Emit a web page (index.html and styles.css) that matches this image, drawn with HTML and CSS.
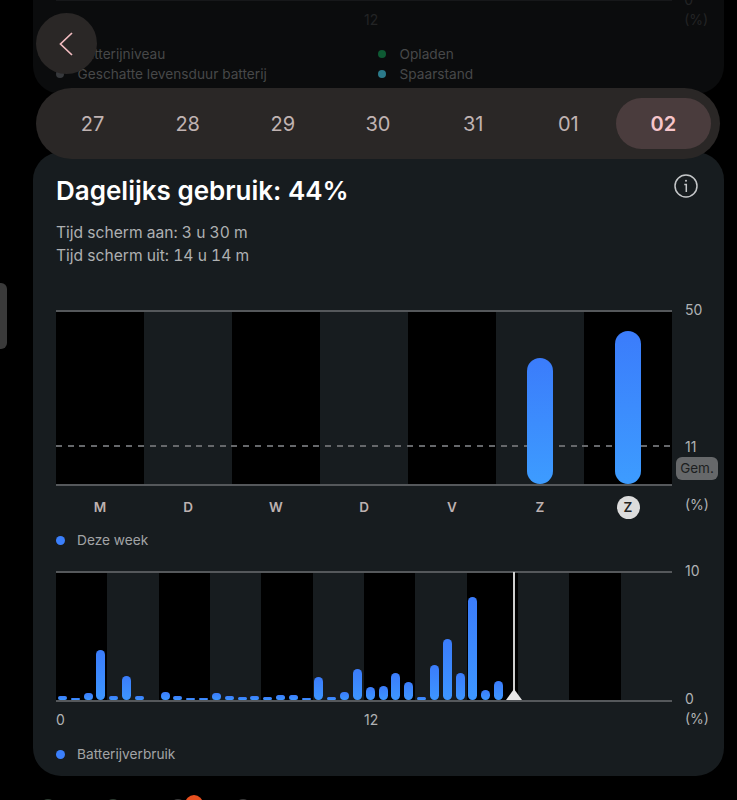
FILE: index.html
```html
<!DOCTYPE html>
<html lang="nl">
<head>
  <meta charset="UTF-8" />
  <title>Batterij</title>
  <link rel="stylesheet" href="styles.css">
</head>
<body>
  <div class="side-handle"></div>

  <button class="back-btn" aria-label="Terug">
    <svg width="16" height="26" viewBox="0 0 16 26" fill="none"><path d="M14 2 L2.5 13 L14 24" stroke="#f2bcc0" stroke-width="1.7"/></svg>
  </button>

  <!-- vorige kaart, loopt onder de datums door -->
  <section class="top-card">
    <div class="top-rule"></div>
    <div class="top-axis">
      <span class="top-noon">12</span>
      <span class="top-unit"><span class="top-zero">0</span>(%)</span>
    </div>
    <div class="top-legend">
      <div class="legend-item"><i class="dot dot-grey"></i>Batterijniveau</div>
      <div class="legend-item"><i class="dot dot-green"></i>Opladen</div>
      <div class="legend-item"><i class="dot dot-grey"></i>Geschatte levensduur batterij</div>
      <div class="legend-item"><i class="dot dot-teal"></i>Spaarstand</div>
    </div>
  </section>

  <nav class="date-pill">
    <div class="date">27</div>
    <div class="date">28</div>
    <div class="date">29</div>
    <div class="date">30</div>
    <div class="date">31</div>
    <div class="date">01</div>
    <div class="date active">02</div>
  </nav>

  <main class="main-card">
    <div class="card-head">
      <h1>Dagelijks gebruik: 44%</h1>
      <svg class="info" width="24" height="24" viewBox="0 0 24 24" fill="none" stroke="#c4c6c8">
        <circle cx="12" cy="12" r="11" stroke-width="1.5"/>
        <path d="M10.3 10.6 H12.3 V18" stroke-width="1.5"/>
        <circle cx="12" cy="6.8" r="1" fill="#c4c6c8" stroke="none"/>
      </svg>
    </div>
    <p class="stats">Tijd scherm aan: 3 u 30 m<br>Tijd scherm uit: 14 u 14 m</p>

    <!-- week -->
    <div class="week-chart">
      <div class="week-left">
        <div class="week-plot">
          <div class="week-col dark"></div>
          <div class="week-col"></div>
          <div class="week-col dark"></div>
          <div class="week-col"></div>
          <div class="week-col dark"></div>
          <div class="week-col"><div class="week-bar" style="height:126px"></div></div>
          <div class="week-col dark"><div class="week-bar" style="height:153px"></div></div>
          <div class="avg-line"></div>
        </div>
        <div class="week-days">
          <span>M</span><span>D</span><span>W</span><span>D</span><span>V</span><span>Z</span><span><b class="today">Z</b></span>
        </div>
      </div>
      <div class="week-axis">
        <span>50</span>
        <span class="avg-value">11</span>
        <span class="avg-badge">Gem.</span>
        <span class="week-unit">(%)</span>
      </div>
    </div>

    <div class="legend-item chart-legend"><i class="dot dot-blue"></i>Deze week</div>

    <!-- per uur -->
    <div class="hour-chart">
      <div class="hour-left">
        <div class="hour-plot">
          <div class="hour-bands">
            <i class="dark"></i><i></i><i class="dark"></i><i></i><i class="dark"></i><i></i>
            <i class="dark"></i><i></i><i class="dark"></i><i></i><i class="dark"></i><i></i>
          </div>
          <div class="hour-bars" id="hourBars"></div>
          <div class="now-line"></div>
          <div class="now-mark"></div>
        </div>
        <div class="hour-labels"><span>0</span><span>12</span></div>
      </div>
      <div class="hour-axis">
        <span>10</span>
        <span class="hour-zero">0</span>
        <span>(%)</span>
      </div>
    </div>

    <div class="legend-item chart-legend hour-legend"><i class="dot dot-blue"></i>Batterijverbruik</div>
  </main>

  <div class="dock">
    <i class="dock-icon green"></i>
    <i class="dock-icon green"></i>
    <i class="dock-icon has-badge"></i>
    <i class="dock-icon"></i>
  </div>

  <script src="script.js"></script>
</body>
</html>
```

FILE: styles.css
```css
:root {
  --bg: #000;
  --card: #171c1f;
  --pill: #2a2726;
  --text: #a2a4a6;
  --axis: #b0b2b4;
  --line: #55585b;
  --blue: #3b7ffb;
}
* { box-sizing: border-box; margin: 0; padding: 0; }
body {
  position: relative;
  width: 737px;
  height: 800px;
  overflow: hidden;
  padding: 0 13px 0 33px;
  background: var(--bg);
  color: var(--text);
  font-family: 'Inter', 'Liberation Sans', sans-serif;
  font-size: 14px;
}

.side-handle {
  position: absolute;
  left: 0;
  top: 283px;
  width: 7px;
  height: 66px;
  border-radius: 0 6px 6px 0;
  background: #3a3a3a;
}
.back-btn {
  position: absolute;
  left: 36px;
  top: 13px;
  z-index: 3;
  width: 61px;
  height: 61px;
  display: flex;
  align-items: center;
  justify-content: center;
  padding-right: 2px;
  border: none;
  border-radius: 50%;
  background: var(--pill);
}

/* vorige kaart */
.top-card {
  height: 94px;
  padding: 0 0 0 23px;
  border-radius: 0 0 28px 28px;
  background: #0b0c0d;
  color: #474849;
}
.top-rule { width: 616px; height: 1px; background: #17181a; }
.top-axis { display: flex; height: 20px; margin-top: 9px; line-height: 20px; color: #232425; }
.top-noon { margin-left: 308px; }
.top-unit { margin-left: 306px; }
.top-zero { display: block; margin-top: -20px; }
.top-legend {
  display: grid;
  grid-template-columns: 322px 1fr;
  margin-top: 14px;
}

.legend-item {
  display: flex;
  align-items: center;
  height: 20px;
  gap: 13.5px;
  font-size: 13.7px;
}
.dot { width: 8px; height: 8px; border-radius: 50%; }
.dot-grey { background: #37393c; }
.dot-green { background: #0e5a33; }
.dot-teal { background: #2b7a8a; }
.dot-blue { width: 9px; height: 9px; background: var(--blue); }

/* datums */
.date-pill {
  position: relative;
  z-index: 2;
  display: flex;
  height: 71px;
  margin: -6px 4px -7px 3px;
  padding: 10px 9px;
  border-radius: 36px;
  background: var(--pill);
}
.date {
  flex: 1;
  display: flex;
  align-items: center;
  justify-content: center;
  border-radius: 26px;
  font-size: 20px;
  color: #c0b3b2;
}
.date.active {
  background: #4a3c3d;
  color: #f6c5ca;
  font-weight: 600;
}

/* hoofdkaart */
.main-card {
  height: 624px;
  padding: 20px 0 0 23px;
  border-radius: 28px;
  background: var(--card);
}
.card-head {
  display: flex;
  align-items: center;
  justify-content: space-between;
  height: 36px;
  padding-right: 26px;
}
.card-head h1 {
  font-size: 26px;
  font-weight: 600;
  color: #fff;
}
.info { margin-top: -8px; }
.stats {
  margin-top: 13px;
  font-size: 15.6px;
  line-height: 23px;
  font-variant-numeric: tabular-nums;
  color: #aeb0b2;
}

.week-chart {
  display: flex;
  gap: 3px;
  margin-top: 33px;
}
.week-left { width: 616px; padding-top: 10px; }
.week-plot {
  position: relative;
  display: flex;
  height: 176px;
  border-top: 2px solid var(--line);
  border-bottom: 2px solid var(--line);
}
.week-col {
  flex: 1;
  display: flex;
  align-items: flex-end;
  justify-content: center;
}
.dark { background: #000; }
.week-bar {
  position: relative;
  z-index: 1;
  width: 26px;
  border-radius: 13px;
  background: linear-gradient(#3b7cfb, #3d9cff);
}
.avg-line {
  position: absolute;
  left: 0;
  right: 0;
  top: 133px;
  height: 2px;
  background: repeating-linear-gradient(90deg, #66686b 0 6px, transparent 6px 11.7px);
}
.week-days {
  display: grid;
  grid-template-columns: repeat(7, 1fr);
  margin-top: 9px;
  height: 24px;
  line-height: 24px;
  text-align: center;
  font-size: 13.5px;
  font-weight: 600;
  color: #bdb1b0;
}
.today {
  display: inline-block;
  width: 23px;
  height: 23px;
  line-height: 23px;
  border-radius: 50%;
  background: #dcdcdc;
  color: #222;
  font-weight: 600;
}
.week-axis {
  display: flex;
  flex-direction: column;
  align-items: flex-start;
  padding-left: 10px;
  line-height: 20px;
  color: var(--axis);
}
.avg-value { margin-top: 117px; }
.avg-badge {
  width: 42px;
  height: 23px;
  margin: 0 0 0 -9px;
  border-radius: 6px;
  line-height: 23px;
  text-align: center;
  background: #66686a;
  color: #1c1e20;
  font-size: 13.5px;
}
.week-unit { margin-top: 15px; }

.chart-legend { margin-top: 11px; gap: 12px; color: var(--text); }

.hour-chart { display: flex; gap: 3px; margin-top: 11px; }
.hour-left { width: 616px; padding-top: 10px; }
.hour-plot {
  position: relative;
  display: grid;
  height: 131px;
  border-top: 2px solid var(--line);
  border-bottom: 2px solid var(--line);
}
.hour-bands, .hour-bars { grid-area: 1 / 1; display: flex; }
.hour-bands i { flex: 1; }
.hour-bars { align-items: flex-end; }
.hour-bars span {
  flex: 0 0 12.833px;
  display: flex;
  justify-content: center;
}
.hour-bars b {
  display: block;
  width: 9px;
  border-radius: 4.5px;
  background: linear-gradient(#3b7cfb, #3d96ff);
}
.now-line {
  position: absolute;
  left: 457px;
  top: -1px;
  bottom: 0;
  width: 2px;
  background: #cfcfcf;
}
.now-mark {
  position: absolute;
  left: 450px;
  bottom: 0;
  width: 0;
  height: 0;
  border-left: 8px solid transparent;
  border-right: 8px solid transparent;
  border-bottom: 11px solid #e8e8e8;
}
.hour-labels {
  display: grid;
  grid-template-columns: 1fr 1fr;
  margin-top: 8px;
  height: 20px;
  line-height: 20px;
  color: var(--axis);
}
.hour-axis {
  display: flex;
  flex-direction: column;
  padding-left: 10px;
  line-height: 20px;
  color: var(--axis);
}
.hour-zero { margin-top: 108px; }
.hour-legend { margin-top: 14px; }

/* dock, net zichtbaar onderaan */
.dock {
  display: flex;
  gap: 49px;
  margin: 23px 0 0 7px;
}
.dock-icon {
  position: relative;
  width: 16px;
  height: 16px;
  border-radius: 50%;
  background: #3a3a3a;
}
.dock-icon.green { background: #2e3d32; }
.has-badge::after {
  content: '';
  position: absolute;
  left: 15px;
  top: -4px;
  width: 18px;
  height: 18px;
  border-radius: 50%;
  background: #e8501f;
}
```

FILE: script.js
```js
// verbruik per half uur, in px
var hours = [4,2,7,50,4,24,4,0,8,4,2,2,7,4,3,4,3,5,5,2,23,3,8,31,13,14,27,18,3,35,61,27,103,10,19];
var html = '';
hours.forEach(function (h) {
  html += '<span><b style="height:' + h + 'px"></b></span>';
});
document.getElementById('hourBars').innerHTML = html;
```
